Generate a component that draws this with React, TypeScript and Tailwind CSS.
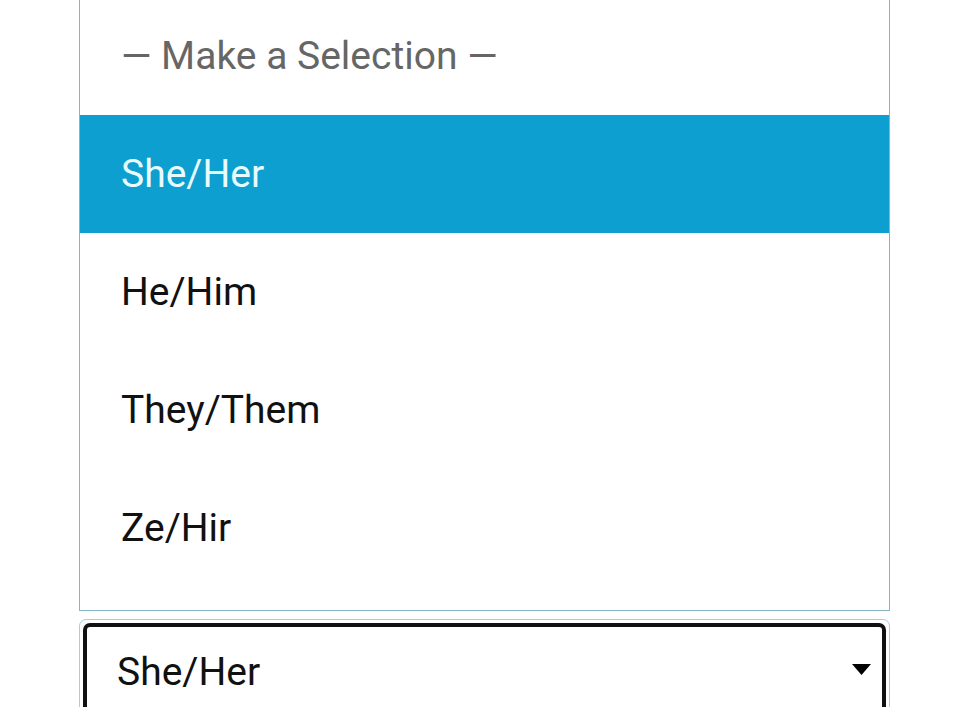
import React from "react";

const options = ["She/Her", "He/Him", "They/Them", "Ze/Hir"];

export default function App() {
  return (
    <div
      className="w-[968px] h-[707px] overflow-hidden bg-white"
      style={{ fontFamily: "Roboto, 'Noto Sans', sans-serif" }}
    >
      <div className="ml-[79px] w-[811px] flex flex-col">
        <div className="-mt-[4px] border-[1.5px] border-[#86b6c6] bg-white pb-[23px]">
          <div className="h-[118px] flex items-center pl-[41px] text-[39px] text-[#666666]">
            — Make a Selection —
          </div>
          {options.map((o, i) => (
            <div
              key={o}
              className={
                i === 0
                  ? "h-[118px] flex items-center pl-[41px] text-[39px] bg-[#0c9fcf] text-[#e8fbff]"
                  : "h-[118px] flex items-center pl-[41px] text-[39px] text-[#111111]"
              }
            >
              {o}
            </div>
          ))}
        </div>
        <div className="mt-[8px] border-[1.5px] border-[#a6cfdc] rounded-[7px] p-[3px]">
          <div className="relative h-[120px] border-4 border-[#111111] rounded-[7px] flex items-start pl-[30px] pt-[16px] text-[39px] text-[#111111]">
            She/Her
            <svg
              className="absolute right-[11px] top-[37px]"
              width="19"
              height="11"
              viewBox="0 0 19 11"
            >
              <path d="M0 0 L19 0 L9.5 11 Z" fill="#000" />
            </svg>
          </div>
        </div>
      </div>
    </div>
  );
}
